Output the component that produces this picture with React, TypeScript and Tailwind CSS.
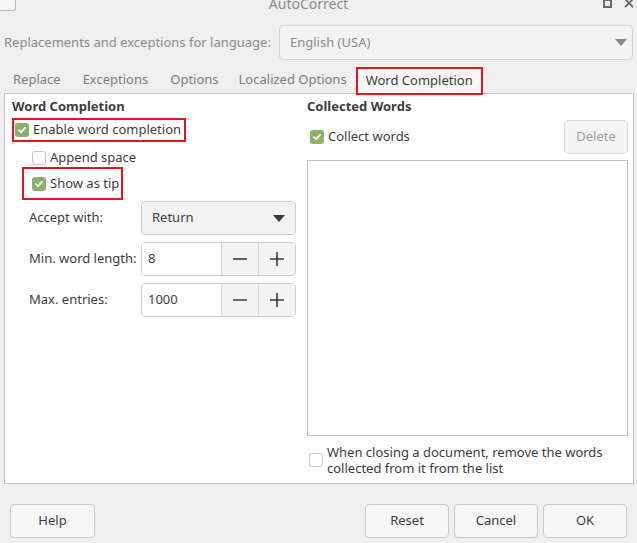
import { ReactNode } from 'react';

function Check({ checked }: { checked: boolean }) {
  if (!checked) {
    return <span className="block w-[14px] h-[14px] rounded-[3px] border border-[#c4c4c4] bg-white shrink-0" />;
  }
  return (
    <span className="w-[14px] h-[14px] rounded-[3px] bg-[#8db06d] flex items-center justify-center shrink-0">
      <svg width="10" height="10" viewBox="0 0 10 10">
        <path d="M2 5.2 L4.1 7.2 L8 2.8" fill="none" stroke="white" strokeWidth="1.8" strokeLinecap="round" strokeLinejoin="round" />
      </svg>
    </span>
  );
}

function Arrow({ color }: { color: string }) {
  return (
    <svg width="12" height="7" viewBox="0 0 12 7">
      <path d="M0 0 L12 0 L6 7 Z" fill={color} />
    </svg>
  );
}

function Spin({ value }: { value: string }) {
  return (
    <div className="flex w-[155px] h-[34px] border border-[#cdcdcd] rounded-[4px] overflow-hidden">
      <div className="w-[80px] bg-white flex items-center pl-[6px] border-r border-[#d4d4d4]">{value}</div>
      <div className="w-[37px] bg-[#f4f4f4] flex items-center justify-center border-r border-[#d4d4d4]">
        <svg width="14" height="14" viewBox="0 0 14 14">
          <path d="M0 7 H14" stroke="#3a3a3a" strokeWidth="1.6" />
        </svg>
      </div>
      <div className="flex-1 bg-[#f4f4f4] flex items-center justify-center">
        <svg width="14" height="14" viewBox="0 0 14 14">
          <path d="M0 7 H14 M7 0 V14" stroke="#3a3a3a" strokeWidth="1.6" />
        </svg>
      </div>
    </div>
  );
}

function Button({ children, className = 'w-[84px]' }: { children: ReactNode; className?: string }) {
  return (
    <div className={`h-[34px] rounded-[4px] border border-[#c9c9c9] bg-[#f7f7f7] flex items-center justify-center ${className}`}>
      {children}
    </div>
  );
}

export default function App() {
  return (
    <div
      className="w-[637px] h-[543px] bg-[#efefef] text-[#3c3c3c] text-[13px] overflow-hidden flex flex-col whitespace-nowrap"
      style={{ fontFamily: '"Noto Sans", "Open Sans", sans-serif' }}
    >
      {/* title bar */}
      <div className="h-[12px] flex items-start overflow-hidden">
        <div className="w-[16px] h-[11px] bg-[#f7f7f7] border-r border-b border-[#b9b9b9] rounded-br-[3px]" />
        <div className="flex-1 flex justify-center -mt-[7px] pr-[2px]">
          <span className="text-[#8a8a8a] text-[14px]">AutoCorrect</span>
        </div>
        <div className="flex items-start gap-[12px] pr-[3px] -mt-[2px]">
          <span className="w-[9px] h-[9px] border-[2px] border-[#6a6a6a] mt-[1px]" />
          <svg width="10" height="10" viewBox="0 0 10 10">
            <path d="M1 1 L9 9 M9 1 L1 9" stroke="#6a6a6a" strokeWidth="1.8" />
          </svg>
        </div>
      </div>

      {/* language row */}
      <div className="mt-[13px] h-[35px] flex items-center pl-[4px] pr-[4px]">
        <span className="text-[#8a8a8a] w-[275px] shrink-0">Replacements and exceptions for language:</span>
        <div className="flex-1 h-[35px] border border-[#d2d2d2] rounded-[4px] bg-[#f3f3f3] flex items-center justify-between pl-[10px] pr-[5px]">
          <span className="text-[#8a8a8a]">English (USA)</span>
          <Arrow color="#8a8a8a" />
        </div>
      </div>

      {/* tabs */}
      <div className="mt-[7px] h-[26px] flex items-end pl-[13px] text-[#7c7c7c]">
        <span className="h-[27px] flex items-center mr-[22px]">Replace</span>
        <span className="h-[27px] flex items-center mr-[22px]">Exceptions</span>
        <span className="h-[27px] flex items-center mr-[20px]">Options</span>
        <span className="h-[27px] flex items-center mr-[9px]">Localized Options</span>
        <span className="h-[28px] -mb-[2px] px-[8px] flex items-center border-2 border-[#e8141c] bg-[#f7f7f7] text-[#3c3c3c] relative z-10">
          Word Completion
        </span>
      </div>

      {/* panel */}
      <div className="ml-[4px] w-[630px] h-[391px] bg-white border border-[#c2c2c2] flex">
        {/* left column */}
        <div className="w-[302px] pl-[7px] pt-[4px] flex flex-col">
          <div className="font-bold h-[18px] flex items-center">Word Completion</div>
          <div className="mt-[2px] self-start h-[24px] border-2 border-[#e8141c] flex items-center gap-[4px] pl-[1px] pr-[3px]">
            <Check checked />
            <span>Enable word completion</span>
          </div>
          <div className="mt-[8px] ml-[20px] h-[16px] flex items-center gap-[4px]">
            <Check checked={false} />
            <span>Append space</span>
          </div>
          <div className="mt-[1px] ml-[10px] w-[101px] h-[33px] border-2 border-[#e8141c] flex items-center gap-[4px] pl-[8px]">
            <Check checked />
            <span>Show as tip</span>
          </div>
          <div className="mt-[1px] flex flex-col gap-[7px] pl-[17px]">
            <div className="flex items-center">
              <span className="w-[112px]">Accept with:</span>
              <div className="w-[155px] h-[34px] border border-[#cdcdcd] rounded-[4px] bg-[#f3f3f3] flex items-center justify-between pl-[10px] pr-[10px]">
                <span>Return</span>
                <Arrow color="#3a3a3a" />
              </div>
            </div>
            <div className="flex items-center">
              <span className="w-[112px]">Min. word length:</span>
              <Spin value="8" />
            </div>
            <div className="flex items-center">
              <span className="w-[112px]">Max. entries:</span>
              <Spin value="1000" />
            </div>
          </div>
        </div>

        {/* right column */}
        <div className="w-[321px] pt-[4px] flex flex-col">
          <div className="font-bold h-[18px] flex items-center">Collected Words</div>
          <div className="mt-[4px] h-[34px] flex items-center justify-between">
            <div className="flex items-center gap-[4px] pl-[3px]">
              <Check checked />
              <span>Collect words</span>
            </div>
            <div className="w-[64px] h-[34px] rounded-[4px] border border-[#dadada] bg-[#f5f5f5] text-[#9c9c9c] flex items-center justify-center">
              Delete
            </div>
          </div>
          <div className="mt-[6px] h-[276px] border border-[#c0c0c0] bg-white" />
          <div className="mt-[8px] flex items-start gap-[4px] pl-[2px] leading-[16px]">
            <span className="mt-[9px] shrink-0">
              <Check checked={false} />
            </span>
            <span>
              When closing a document, remove the words
              <br />
              collected from it from the list
            </span>
          </div>
        </div>
      </div>

      {/* bottom buttons */}
      <div className="mt-[20px] flex items-center px-[10px]">
        <Button className="w-[85px]">Help</Button>
        <div className="flex-1" />
        <div className="flex gap-[5px]">
          <Button>Reset</Button>
          <Button>Cancel</Button>
          <Button>OK</Button>
        </div>
      </div>
    </div>
  );
}
